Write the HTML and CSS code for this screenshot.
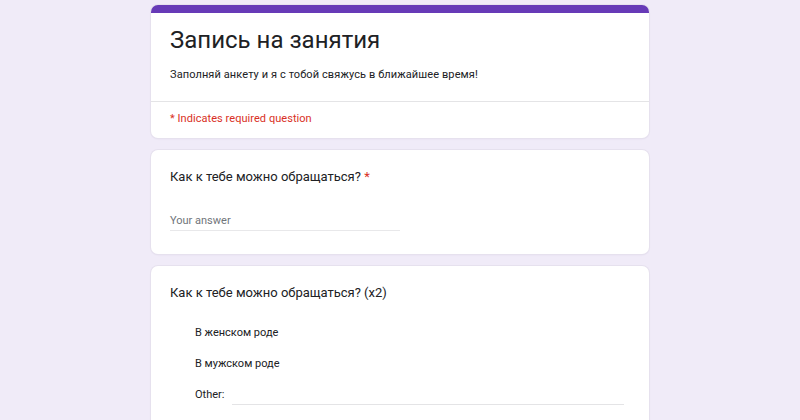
FILE: index.html
```html
<!DOCTYPE html>
<html lang="ru">
<head>
<meta charset="utf-8">
<title>Запись на занятия</title>
<link rel="stylesheet" href="styles.css">
</head>
<body>
<main class="form">
  <section class="card header-card">
    <div class="header-main">
      <h1 class="title">Запись на занятия</h1>
      <p class="desc">Заполняй анкету и я с тобой свяжусь в ближайшее время!</p>
    </div>
    <div class="header-note">* Indicates required question</div>
  </section>

  <section class="card question">
    <div class="q-title">Как к тебе можно обращаться? <span class="req">*</span></div>
    <div class="answer">Your answer</div>
  </section>

  <section class="card question">
    <div class="q-title">Как к тебе можно обращаться? (x2)</div>
    <div class="options">
      <div class="option">В женском роде</div>
      <div class="option">В мужском роде</div>
      <div class="option other"><span>Other:</span><span class="other-line"></span></div>
    </div>
  </section>
</main>
</body>
</html>
```

FILE: styles.css
```css
html, body {
  margin: 0;
  padding: 0;
}
body {
  background: #f0ebf8;
  font-family: Roboto, "Liberation Sans", sans-serif;
  color: #202124;
  height: 420px;
  overflow: hidden;
}
.form {
  width: 498px;
  margin: 0 auto;
  padding-top: 5px;
  display: flex;
  flex-direction: column;
  gap: 12px;
}
.card {
  background: #fff;
  border-radius: 7px;
  box-shadow: 0 0 0 1px #e6e1ee, 0 1px 2px rgba(60, 40, 100, 0.08);
}
.header-card {
  border-top: 8px solid #673ab7;
}
.header-main {
  padding: 11px 19px 18px;
  border-bottom: 1px solid #e4e4e6;
}
.title {
  margin: 0;
  font-family: Roboto, "Liberation Sans", sans-serif;
  font-weight: 400;
  font-size: 24px;
  line-height: 32px;
  color: #202124;
}
.desc {
  margin: 11px 0 0;
  font-size: 11px;
  line-height: 16px;
  letter-spacing: 0.1px;
  color: #202124;
}
.header-note {
  padding: 9px 19px 11px;
  font-size: 11px;
  line-height: 16px;
  letter-spacing: 0.05px;
  color: #d93025;
}
.question {
  padding: 17px 19px 23px;
}
.q-title {
  font-size: 13px;
  line-height: 20px;
  color: #202124;
}
.req {
  color: #d93025;
}
.answer {
  margin-top: 26px;
  width: 230px;
  font-size: 11px;
  line-height: 16px;
  color: #70757a;
  padding-bottom: 1px;
  border-bottom: 1px solid #e8e8ea;
}
.options {
  margin-top: 22px;
  padding-left: 25px;
  display: flex;
  flex-direction: column;
  gap: 15px;
}
.option {
  font-size: 11px;
  line-height: 16px;
  color: #202124;
}
.other {
  display: flex;
  align-items: flex-end;
  gap: 8px;
}
.other-line {
  flex: 1;
  margin-right: 6px;
  height: 0;
  border-bottom: 1px solid #e4e4e6;
  margin-bottom: -2px;
}
```
